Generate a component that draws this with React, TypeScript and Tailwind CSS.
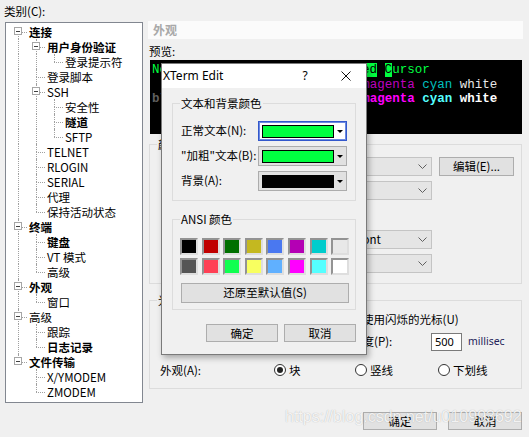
import React from "react";

type TNode = { label: string; bold?: boolean; children?: TNode[] };

const tree: TNode[] = [
  {
    label: "连接",
    bold: true,
    children: [
      { label: "用户身份验证", bold: true, children: [{ label: "登录提示符" }] },
      { label: "登录脚本" },
      {
        label: "SSH",
        children: [{ label: "安全性" }, { label: "隧道", bold: true }, { label: "SFTP" }],
      },
      { label: "TELNET" },
      { label: "RLOGIN" },
      { label: "SERIAL" },
      { label: "代理" },
      { label: "保持活动状态" },
    ],
  },
  {
    label: "终端",
    bold: true,
    children: [{ label: "键盘", bold: true }, { label: "VT 模式" }, { label: "高级" }],
  },
  { label: "外观", bold: true, children: [{ label: "窗口" }] },
  {
    label: "高级",
    children: [{ label: "跟踪" }, { label: "日志记录", bold: true }],
  },
  {
    label: "文件传输",
    bold: true,
    children: [{ label: "X/YMODEM" }, { label: "ZMODEM" }],
  },
];

type Row = {
  label: string;
  bold?: boolean;
  level: number;
  guides: boolean[];
  last: boolean;
  first: boolean;
  open: boolean;
};

function flatten(nodes: TNode[], level = 0, guides: boolean[] = [], out: Row[] = []) {
  nodes.forEach((n, i) => {
    const last = i === nodes.length - 1;
    out.push({
      label: n.label,
      bold: n.bold,
      level,
      guides,
      last,
      first: level === 0 && i === 0,
      open: !!n.children,
    });
    if (n.children) flatten(n.children, level + 1, [...guides, !last], out);
  });
  return out;
}

const rows = flatten(tree);

function TreeRow({ r }: { r: Row }) {
  return (
    <div className="flex h-[15px] items-center">
      {r.guides.map((g, i) => (
        <div key={i} className="relative w-[18px] h-full shrink-0">
          {g && <span className="absolute left-[9px] top-0 bottom-0 border-l border-dotted border-[#a0a0a0]" />}
        </div>
      ))}
      <div className="relative w-[18px] h-full shrink-0">
        {!r.first && <span className="absolute left-[9px] top-0 h-1/2 border-l border-dotted border-[#a0a0a0]" />}
        {!r.last && <span className="absolute left-[9px] top-1/2 bottom-0 border-l border-dotted border-[#a0a0a0]" />}
        <span className="absolute left-[9px] right-0 top-1/2 border-t border-dotted border-[#a0a0a0]" />
        {r.open && (
          <span className="absolute left-[5px] top-[3px] w-[8px] h-[8px] border border-[#a6a6a6] bg-white flex items-center justify-center">
            <span className="w-[4px] h-px bg-[#404040]" />
          </span>
        )}
      </div>
      <span className={`ml-[2px] whitespace-nowrap leading-[14px] ${r.bold ? "font-bold" : ""}`}>{r.label}</span>
    </div>
  );
}

function ColorCombo({ swatch, focus }: { swatch: string; focus?: boolean }) {
  return (
    <div
      className={`w-[89px] h-[20px] flex items-center pl-[3px] border ${
        focus ? "border-[#3358cc] bg-white shadow-[inset_0_0_0_1px_#6c8ae0]" : "border-[#acacac] bg-[#e1e1e1]"
      }`}
    >
      <div className={`w-[72px] h-[13px] border border-black ${swatch}`} />
      <span className="ml-auto mr-[3px] w-0 h-0 border-x-[3px] border-x-transparent border-t-[3px] border-t-black" />
    </div>
  );
}

const ansi1 = ["bg-[#000000]", "bg-[#c00000]", "bg-[#007000]", "bg-[#c4b820]", "bg-[#4a78f0]", "bg-[#b400b4]", "bg-[#00cccc]", "bg-[#e8e8e8]"];
const ansi2 = ["bg-[#555555]", "bg-[#ff4055]", "bg-[#10ff50]", "bg-[#f8ff60]", "bg-[#60b0ff]", "bg-[#ff00ff]", "bg-[#55ffff]", "bg-[#ffffff]"];

const line2 = [
  ["black", "text-black"],
  ["red", "text-[#c00000]"],
  ["green", "text-[#007000]"],
  ["yellow", "text-[#c4b820]"],
  ["blue", "text-[#4a78f0]"],
  ["magenta", "text-[#c000c0]"],
  ["cyan", "text-[#00c0c0]"],
  ["white", "text-[#e8e8e8]"],
];
const line3 = [
  ["black", "text-[#606060]"],
  ["red", "text-[#ff4055]"],
  ["green", "text-[#10ff50]"],
  ["yellow", "text-[#f8ff60]"],
  ["blue", "text-[#60b0ff]"],
  ["magenta", "text-[#ff00ff]"],
  ["cyan", "text-[#55ffff]"],
  ["white", "text-white"],
];

function Chevron() {
  return (
    <svg width="9" height="5" viewBox="0 0 9 5" className="ml-auto mr-[4px]">
      <polyline points="0.5,0.5 4.5,4.5 8.5,0.5" fill="none" stroke="#606060" strokeWidth="1" />
    </svg>
  );
}

function GrayCombo({ text }: { text?: string }) {
  return (
    <div className="w-[182px] h-[19px] flex items-center border border-[#c4c4c4] bg-[#e5e5e5]">
      {text && <span className="pl-[64px] whitespace-nowrap">{text}</span>}
      <Chevron />
    </div>
  );
}

function Radio({ label, on, w }: { label: string; on?: boolean; w: string }) {
  return (
    <div className={`flex items-center gap-[3px] ${w}`}>
      <span className="w-[12px] h-[12px] rounded-full border border-[#333] bg-white flex items-center justify-center">
        {on && <span className="w-[6px] h-[6px] rounded-full bg-[#222]" />}
      </span>
      <span>{label}</span>
    </div>
  );
}

export default function App() {
  return (
    <div className="relative w-[529px] h-[437px] overflow-hidden bg-[#f0f0f0] flex text-[11.5px] text-black font-['Noto_Sans_CJK_SC',sans-serif]">
      {/* category tree */}
      <div className="w-[145px] shrink-0">
        <div className="h-[22px] pl-[4px] pt-[4px] leading-[14px]">类别(C):</div>
        <div className="ml-[5px] w-[138px] h-[381px] border border-[#828790] bg-white pt-[1px] pl-[3px]">
          {rows.map((r, i) => (
            <TreeRow key={i} r={r} />
          ))}
        </div>
      </div>

      {/* appearance page */}
      <div className="flex-1 flex flex-col">
        <div className="ml-[3px] mt-[21px] w-[375px] h-[18px] bg-[#fbfbfb] flex items-center pl-[5px] text-[12px] font-bold text-[#a8a8a8]">
          外观
        </div>
        <div className="ml-[4px] mt-[5px] leading-[14px]">预览:</div>
        <div className="ml-[5px] mt-[2px] w-[372px] h-[74px] bg-black pl-[2px] pt-[3px] font-['Liberation_Mono',monospace] text-[12.5px] leading-[14.6px] whitespace-pre text-[#00ff40]">
          <div>
            Normal <b>Bold</b> <span className="underline">Underline</span>{" "}
            <span className="bg-[#00ff40] text-black">Reversed</span> <span className="bg-[#00ff40] text-black">C</span>ursor
          </div>
          <div>
            {line2.map(([w, c], i) => (
              <span key={i} className={c}>
                {w}
                {i < line2.length - 1 ? " " : ""}
              </span>
            ))}
          </div>
          <div className="font-bold">
            {line3.map(([w, c], i) => (
              <span key={i} className={c}>
                {w}
                {i < line3.length - 1 ? " " : ""}
              </span>
            ))}
          </div>
        </div>

        {/* color scheme / font group */}
        <div className="ml-[4px] mt-[10px] w-[373px] h-[140px] border border-[#dcdcdc]">
          <div className="-mt-[8px] ml-[7px] px-[1px] w-fit bg-[#f0f0f0] leading-[14px]">颜色方案</div>
          <div className="mt-[6px] flex items-center h-[19px]">
            <span className="w-[100px] pl-[12px]">配色方案(S):</span>
            <GrayCombo />
            <button className="ml-[7px] w-[75px] h-[19px] bg-[#e1e1e1] border border-[#adadad]">编辑(E)...</button>
          </div>
          <div className="mt-[5px] flex items-center h-[19px]">
            <span className="w-[100px] pl-[12px]">字体大小(Z):</span>
            <GrayCombo />
          </div>
          <div className="mt-[30px] flex items-center h-[19px]">
            <span className="w-[100px] pl-[12px]">字体(F):</span>
            <GrayCombo text="Default Font" />
          </div>
          <div className="mt-[5px] flex items-center h-[19px]">
            <span className="w-[100px] pl-[12px]">亚洲字体(I):</span>
            <GrayCombo />
          </div>
        </div>

        {/* cursor group */}
        <div className="ml-[4px] mt-[16px] w-[373px] h-[89px] border border-[#dcdcdc]">
          <div className="-mt-[8px] ml-[7px] px-[1px] w-fit bg-[#f0f0f0] leading-[14px]">光标</div>
          <div className="mt-[5px] h-[16px] flex items-center pl-[196px] gap-[3px]">
            <span className="w-[13px] h-[13px] border border-[#333] bg-white" />
            <span>使用闪烁的光标(U)</span>
          </div>
          <div className="mt-[5px] h-[18px] flex items-center pl-[201px]">
            <span className="w-[80px]">速度(P):</span>
            <div className="w-[31px] h-[18px] bg-white border border-[#7a7a7a] pl-[3px] flex items-center text-[11px] font-['Noto_Sans',sans-serif]">
              500
            </div>
            <span className="ml-[6px] text-[10.5px] text-[#24245a] font-['Noto_Sans',sans-serif]">millisec</span>
          </div>
          <div className="mt-[12px] h-[14px] flex items-center pl-[10px] leading-[14px]">
            <span className="w-[114px]">外观(A):</span>
            <Radio label="块" on w="w-[81px]" />
            <Radio label="竖线" w="w-[83px]" />
            <Radio label="下划线" w="w-[80px]" />
          </div>
        </div>

        <div className="mt-[23px] h-[18px] flex justify-end pr-[7px] gap-[11px]">
          <button className="w-[74px] h-[18px] bg-[#e1e1e1] border border-[#adadad]">确定</button>
          <button className="w-[74px] h-[18px] bg-[#e1e1e1] border border-[#adadad]">取消</button>
        </div>
      </div>

      {/* XTerm Edit dialog */}
      <div className="absolute left-[161px] top-[63px] w-[206px] h-[292px] border border-[#7a7a7a] bg-[#f0f0f0] shadow-[2px_3px_6px_rgba(0,0,0,0.3)] flex flex-col">
        <div className="h-[24px] bg-white flex items-center">
          <span className="pl-[1px] text-[12px] font-['Noto_Sans','Noto_Sans_CJK_SC',sans-serif]">XTerm Edit</span>
          <span className="ml-auto w-[30px] text-center text-[12px] font-['Noto_Sans',sans-serif]">?</span>
          <span className="ml-[6px] w-[40px] flex justify-center">
            <svg width="10" height="10" viewBox="0 0 10 10">
              <path d="M0.5 0.5 L9.5 9.5 M9.5 0.5 L0.5 9.5" stroke="#111" strokeWidth="1" />
            </svg>
          </span>
        </div>
        <div className="px-[10px]">
          <div className="mt-[15px] h-[98px] border border-[#dcdcdc] pl-[8px]">
            <div className="-mt-[8px] ml-[-1px] px-[1px] w-fit bg-[#f0f0f0] leading-[14px]">文本和背景颜色</div>
            <div className="mt-[11px] flex items-center h-[20px]">
              <span className="w-[77px]">正常文本(N):</span>
              <ColorCombo swatch="bg-[#00ff40]" focus />
            </div>
            <div className="mt-[5px] flex items-center h-[20px]">
              <span className="w-[77px]">"加粗"文本(B):</span>
              <ColorCombo swatch="bg-[#00ff40]" />
            </div>
            <div className="mt-[5px] flex items-center h-[20px]">
              <span className="w-[77px]">背景(A):</span>
              <ColorCombo swatch="bg-black" />
            </div>
          </div>

          <div className="mt-[18px] h-[91px] border border-[#dcdcdc] pl-[7px]">
            <div className="-mt-[8px] px-[1px] w-fit bg-[#f0f0f0] leading-[14px]">ANSI 颜色</div>
            <div className="mt-[12px] grid grid-cols-[repeat(8,18px)] gap-x-[3.6px] gap-y-[3px]">
              {[...ansi1, ...ansi2].map((c, i) => (
                <div
                  key={i}
                  className={`h-[17px] border-2 border-t-[#939393] border-l-[#939393] border-b-[#dedede] border-r-[#dedede] ${c}`}
                />
              ))}
            </div>
            <button className="mt-[8px] ml-[1px] w-[168px] h-[20px] bg-[#e1e1e1] border border-[#adadad]">
              还原至默认值(S)
            </button>
          </div>

          <div className="mt-[14px] flex justify-end gap-[6px]">
            <button className="w-[72px] h-[18px] bg-[#e1e1e1] border border-[#adadad]">确定</button>
            <button className="w-[72px] h-[18px] bg-[#e1e1e1] border border-[#adadad]">取消</button>
          </div>
        </div>
      </div>

      {/* watermark */}
      <div className="absolute left-[285px] top-[409px] text-[16px] leading-none text-white/85 font-['Liberation_Sans',sans-serif] [text-shadow:0_0_1px_rgba(0,0,0,0.3)] pointer-events-none">
        https://blog.csdn.net/u010993692
      </div>
    </div>
  );
}
